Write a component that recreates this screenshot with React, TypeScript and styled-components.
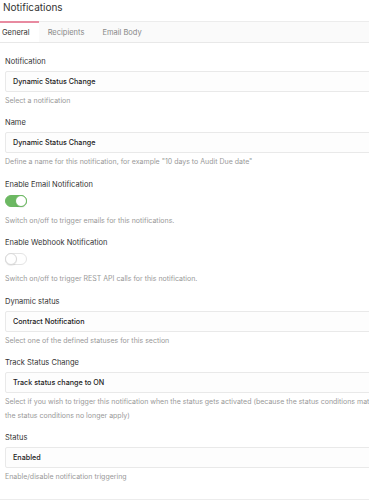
import styled, { createGlobalStyle } from "styled-components";

const Global = createGlobalStyle`
    html, body {
        margin: 0;
        padding: 0;
        background: #fff;
        overflow: hidden;
    }
    body {
        font-family: Inter, "Noto Sans", sans-serif;
        color: #333;
    }
`

const Page = styled.div`
    width: 470px;
    height: 500px;
    border-bottom: 1px solid #ececec;
    box-sizing: border-box;
`

const Title = styled.h1`
    margin: 0;
    padding: 0 0 0 3px;
    height: 21px;
    font-size: 10px;
    font-weight: 400;
    line-height: 14px;
    color: #333;
`

const TabBar = styled.div`
    display: flex;
    height: 22px;
    box-sizing: border-box;
    border-top: 1px solid #ececec;
    border-bottom: 1px solid #e8e8e8;
    background: #fafafa;
`

const Tab = styled.div<{ $active?: boolean }>`
    display: flex;
    align-items: center;
    padding: 0 9px 0 ${p => (p.$active ? "2px" : "9px")};
    margin-top: -1px;
    font-size: 7.5px;
    color: ${p => (p.$active ? "#333" : "#888")};
    background: ${p => (p.$active ? "#fff" : "transparent")};
    border-top: 2px solid ${p => (p.$active ? "#e88aa0" : "transparent")};
`

const Form = styled.div`
    padding: 14px 0 0 5px;
`

const Field = styled.div`
    display: flex;
    flex-direction: column;
    margin-bottom: 10.4px;
`

const Label = styled.label`
    font-size: 7.5px;
    line-height: 10px;
    color: #333;
    margin-bottom: 4px;
`

const Input = styled.div`
    height: 21px;
    width: 420px;
    box-sizing: border-box;
    border: 1px solid #e9e9e9;
    border-radius: 2px;
    background: #fdfdfd;
    display: flex;
    align-items: center;
    padding-left: 7px;
    font-size: 7.2px;
    font-weight: 500;
    color: #222;
`

const Help = styled.div<{ $gap?: number }>`
    margin-top: ${p => p.$gap ?? 2}px;
    font-size: 7px;
    line-height: 14px;
    color: #999;
`

const Switch = styled.div<{ $on?: boolean }>`
    width: 22px;
    height: 12px;
    box-sizing: border-box;
    border-radius: 6px;
    margin-top: 1px;
    position: relative;
    background: ${p => (p.$on ? "#6cb862" : "#fff")};
    border: 1px solid ${p => (p.$on ? "#6cb862" : "#e4e4e4")};
    &::after {
        content: "";
        position: absolute;
        top: -1px;
        left: ${p => (p.$on ? "9px" : "-1px")};
        width: 12px;
        height: 12px;
        box-sizing: border-box;
        border-radius: 50%;
        background: #fff;
        border: 1px solid ${p => (p.$on ? "#6cb862" : "#d8d8d8")};
        box-shadow: 0 1px 1px rgba(0,0,0,0.08);
    }
`

export default function App() {
    return (
        <>
            <Global />
            <Page>
                <Title>Notifications</Title>
                <TabBar>
                    <Tab $active>General</Tab>
                    <Tab>Recipients</Tab>
                    <Tab>Email Body</Tab>
                </TabBar>
                <Form>
                    <Field>
                        <Label>Notification</Label>
                        <Input>Dynamic Status Change</Input>
                        <Help>Select a notification</Help>
                    </Field>
                    <Field>
                        <Label>Name</Label>
                        <Input>Dynamic Status Change</Input>
                        <Help>Define a name for this notification, for example "10 days to Audit Due date"</Help>
                    </Field>
                    <Field>
                        <Label>Enable Email Notification</Label>
                        <Switch $on />
                        <Help $gap={7}>Switch on/off to trigger emails for this notifications.</Help>
                    </Field>
                    <Field>
                        <Label>Enable Webhook Notification</Label>
                        <Switch />
                        <Help $gap={7}>Switch on/off to trigger REST API calls for this notification.</Help>
                    </Field>
                    <Field>
                        <Label>Dynamic status</Label>
                        <Input>Contract Notification</Input>
                        <Help>Select one of the defined statuses for this section</Help>
                    </Field>
                    <Field>
                        <Label>Track Status Change</Label>
                        <Input>Track status change to ON</Input>
                        <Help>Select if you wish to trigger this notification when the status gets activated (because the status conditions match) or deactivated (because the status conditions no longer apply)</Help>
                    </Field>
                    <Field>
                        <Label>Status</Label>
                        <Input>Enabled</Input>
                        <Help>Enable/disable notification triggering</Help>
                    </Field>
                </Form>
            </Page>
        </>
    )
}
